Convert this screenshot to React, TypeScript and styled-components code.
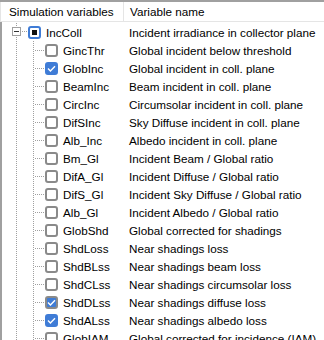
import React from 'react';
import styled, { createGlobalStyle } from 'styled-components';

const GlobalStyle = createGlobalStyle`
  html, body {
    margin: 0;
    padding: 0;
    background: #ffffff;
  }
  body {
    font-family: "Liberation Sans", Arial, sans-serif;
    font-size: 11.7px;
    color: #000000;
  }
`;

const Frame = styled.div`
  width: 324px;
  height: 340px;
  overflow: hidden;
  border-top: 2px solid #a0a0a0;
  box-sizing: border-box;
  background: #ffffff;
`;

const Header = styled.div`
  display: grid;
  grid-template-columns: 123px 1fr;
  height: 20px;
  border-bottom: 1px solid #e5e5e5;
  border-left: 1px solid #e5e5e5;
  box-sizing: border-box;
`;

const HeaderCell = styled.div<{ $first?: boolean }>`
  display: flex;
  align-items: center;
  padding-left: ${(p) => (p.$first ? '8px' : '6px')};
  border-right: ${(p) => (p.$first ? '1px solid #e5e5e5' : 'none')};
  white-space: nowrap;
  overflow: hidden;
`;

const Body = styled.div`
  border-left: 2px solid #a0a0a0;
  padding-top: 1px;
`;

const Row = styled.div`
  display: grid;
  grid-template-columns: 121px 1fr;
  height: 18px;
`;

const NameCell = styled.div`
  display: flex;
  align-items: center;
  white-space: nowrap;
`;

const DescCell = styled.div`
  display: flex;
  align-items: center;
  padding-left: 6px;
  white-space: nowrap;
  overflow: hidden;
`;

const Guide = styled.svg`
  display: block;
  flex: none;
`;

const Box = styled.span<{ $state: 'off' | 'on' | 'dim' | 'mixed' }>`
  flex: none;
  width: 13px;
  height: 13px;
  box-sizing: border-box;
  border-radius: 3px;
  border: 2px solid
    ${(p) => (p.$state === 'off' || p.$state === 'dim' ? '#8a8a8a' : '#3f7cd6')};
  background: ${(p) => (p.$state === 'on' || p.$state === 'dim' ? '#3f7cd6' : '#ffffff')};
  display: flex;
  align-items: center;
  justify-content: center;
`;

const MixedDot = styled.span`
  width: 5px;
  height: 5px;
  background: #111111;
`;

const Label = styled.span`
  margin-left: 5px;
`;

type Item = { name: string; desc: string; state: 'off' | 'on' | 'dim' };

const items: Item[] = [
  { name: 'GincThr', desc: 'Global incident below threshold', state: 'off' },
  { name: 'GlobInc', desc: 'Global incident in coll. plane', state: 'on' },
  { name: 'BeamInc', desc: 'Beam incident in coll. plane', state: 'off' },
  { name: 'CircInc', desc: 'Circumsolar incident in coll. plane', state: 'off' },
  { name: 'DifSInc', desc: 'Sky Diffuse incident in coll. plane', state: 'off' },
  { name: 'Alb_Inc', desc: 'Albedo incident in coll. plane', state: 'off' },
  { name: 'Bm_Gl', desc: 'Incident Beam / Global ratio', state: 'off' },
  { name: 'DifA_Gl', desc: 'Incident Diffuse / Global ratio', state: 'off' },
  { name: 'DifS_Gl', desc: 'Incident Sky Diffuse / Global ratio', state: 'off' },
  { name: 'Alb_Gl', desc: 'Incident Albedo / Global ratio', state: 'off' },
  { name: 'GlobShd', desc: 'Global corrected for shadings', state: 'off' },
  { name: 'ShdLoss', desc: 'Near shadings loss', state: 'off' },
  { name: 'ShdBLss', desc: 'Near shadings beam loss', state: 'off' },
  { name: 'ShdCLss', desc: 'Near shadings circumsolar loss', state: 'off' },
  { name: 'ShdDLss', desc: 'Near shadings diffuse loss', state: 'dim' },
  { name: 'ShdALss', desc: 'Near shadings albedo loss', state: 'on' },
  { name: 'GlobIAM', desc: 'Global corrected for incidence (IAM)', state: 'off' },
];

const dot = { stroke: '#a0a0a0', strokeWidth: 1, strokeDasharray: '1 1', shapeRendering: 'crispEdges' as const };

const Check = () => (
  <svg width="9" height="9" viewBox="0 0 9 9">
    <path d="M1 4.6 L3.4 7 L8 2.2" fill="none" stroke="#ffffff" strokeWidth={1.4} />
  </svg>
);

const ParentGuide = () => (
  <Guide width="26" height="18">
    <line x1="14.5" y1="0" x2="14.5" y2="5" {...dot} />
    <line x1="14.5" y1="14" x2="14.5" y2="18" {...dot} />
    <rect x="10.5" y="4.5" width="8" height="8" fill="#ffffff" stroke="#a0a0a0" shapeRendering="crispEdges" />
    <line x1="12" y1="8.5" x2="17" y2="8.5" stroke="#333" shapeRendering="crispEdges" />
    <line x1="20" y1="8.5" x2="26" y2="8.5" {...dot} />
  </Guide>
);

const ChildGuide = () => (
  <Guide width="43" height="18">
    <line x1="14.5" y1="0" x2="14.5" y2="18" {...dot} />
    <line x1="31.5" y1="0" x2="31.5" y2="18" {...dot} />
    <line x1="33" y1="9.5" x2="42" y2="9.5" {...dot} />
  </Guide>
);

const App: React.FC = () => {
  return (
    <Frame>
      <GlobalStyle />
      <Header>
        <HeaderCell $first>Simulation variables</HeaderCell>
        <HeaderCell>Variable name</HeaderCell>
      </Header>
      <Body>
        <Row>
          <NameCell>
            <ParentGuide />
            <Box $state="mixed">
              <MixedDot />
            </Box>
            <Label>IncColl</Label>
          </NameCell>
          <DescCell>Incident irradiance in collector plane</DescCell>
        </Row>
        {items.map((it) => (
          <Row key={it.name}>
            <NameCell>
              <ChildGuide />
              <Box $state={it.state}>{it.state !== 'off' && <Check />}</Box>
              <Label>{it.name}</Label>
            </NameCell>
            <DescCell>{it.desc}</DescCell>
          </Row>
        ))}
      </Body>
    </Frame>
  );
};

export default App;
